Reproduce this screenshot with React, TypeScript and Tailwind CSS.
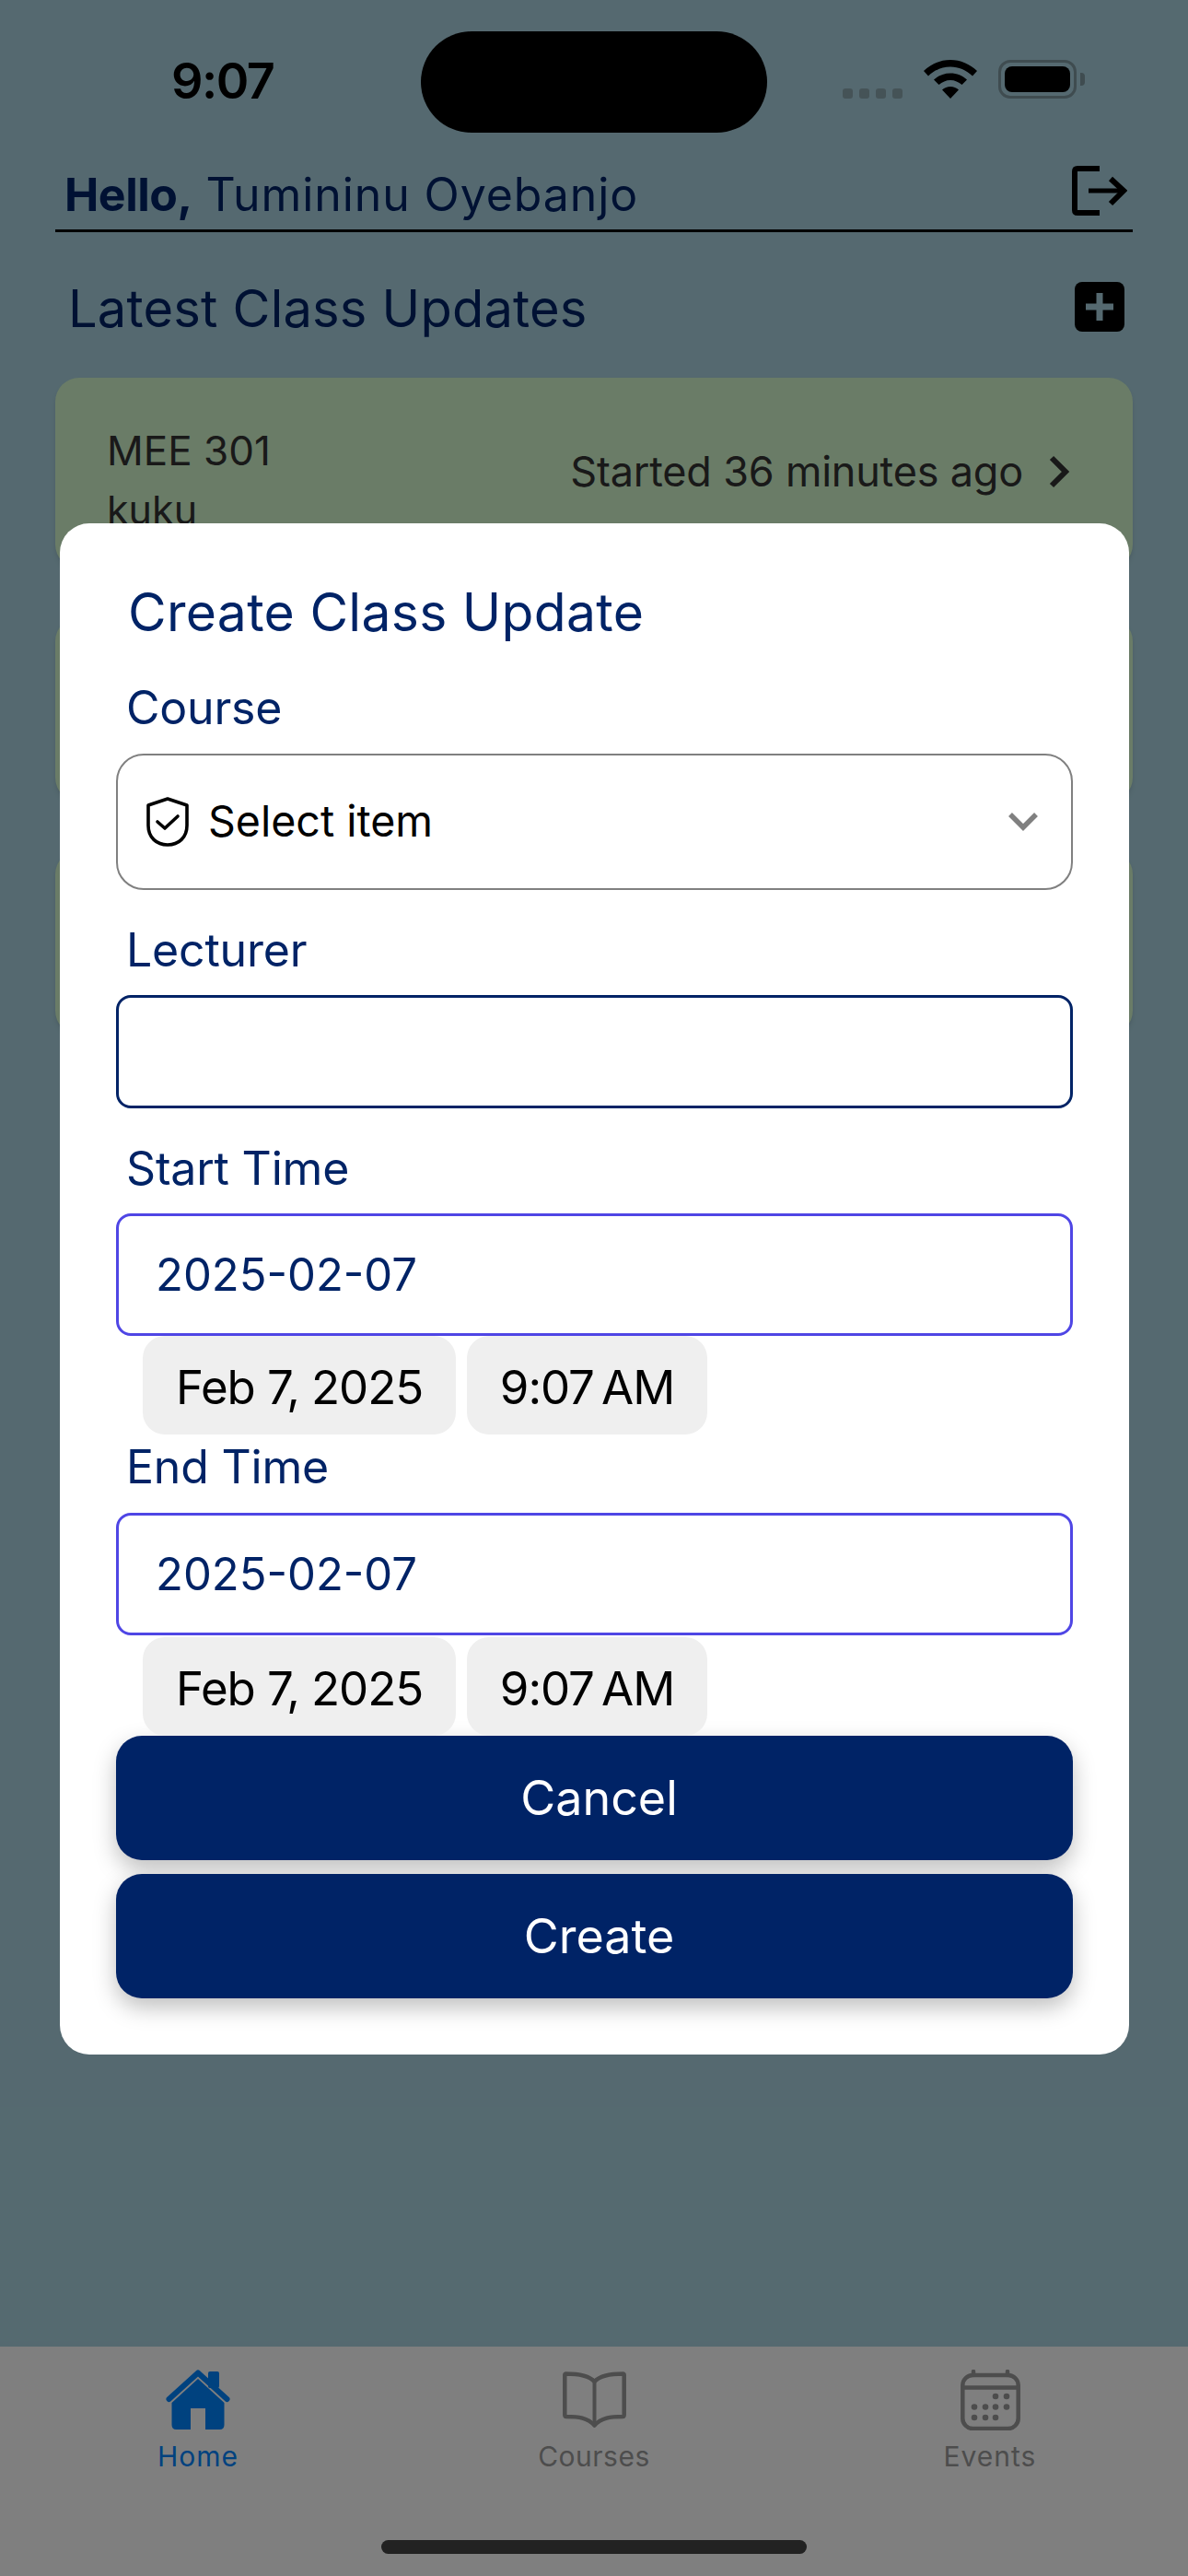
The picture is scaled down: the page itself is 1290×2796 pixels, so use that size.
import React from "react";

const inter = { fontFamily: 'Inter, "Noto Sans", sans-serif' };

function Wifi() {
  return (
    <svg width="58" height="42" viewBox="0 0 58 42" fill="currentColor">
      <path d="M29 0C18 0 8 4.500 0 12l5 5.500C12 11 20 7.500 29 7.500S46 11 53 17.500L58 12C50 4.500 40 0 29 0z" />
      <path d="M29 14.500c-7 0-13 2.500-18 7l5.500 5.500c3.500-3 7.800-5 12.500-5s9 2 12.500 5l5.500-5.500c-5-4.500-11-7-18-7z" />
      <path d="M29 29c-3.500 0-6.500 1.300-9 3.500L29 42l9-9.500c-2.500-2.200-5.500-3.500-9-3.500z" />
    </svg>
  );
}

function Shield() {
  return (
    <svg width="46" height="54" viewBox="0 0 46 54" fill="none" stroke="#000" strokeWidth="3.600" strokeLinejoin="round" strokeLinecap="round" className="shrink-0">
      <path d="M23 2 L44 9 V31 C44 44 35 52 23 52 C11 52 2 44 2 31 V9 Z" />
      <path d="M12 27 L20 34 L34 21" />
    </svg>
  );
}

function HomeIcon() {
  return (
    <svg width="70" height="66" viewBox="0 0 70 66" className="shrink-0">
      <rect x="46" y="2" width="12" height="18" rx="2" fill="#0084ff" />
      <path d="M3.500 32 L35 3.500 L66.500 32" fill="none" stroke="#0084ff" strokeWidth="6" strokeLinecap="round" strokeLinejoin="round" />
      <path d="M35 10 L63.500 36 V60 Q63.500 65 58.500 65 H43 V42 H27 V65 H11.500 Q6.500 65 6.500 60 V36 Z" fill="#0084ff" />
    </svg>
  );
}

function BookIcon() {
  return (
    <svg width="69" height="61" viewBox="0 0 69 61" fill="none" stroke="#9a9a9a" strokeWidth="4.500" strokeLinejoin="round" className="shrink-0">
      <path d="M34.500 11 C28 4 17 2.500 3.500 2.500 C2.800 2.500 2.300 3 2.300 3.700 V47 C2.300 48.500 3 49 4 49 C17 49 27 50 34.500 58.500 C42 50 52 49 65 49 C66 49 66.700 48.500 66.700 47 V3.700 C66.700 3 66.200 2.500 65.500 2.500 C52 2.500 41 4 34.500 11 Z" />
      <path d="M34.500 11 V58" strokeWidth="4" />
    </svg>
  );
}

function CalendarIcon() {
  const dots: [number, number][] = [
    [38, 29], [50, 29],
    [15, 40.500], [27, 40.500], [38, 40.500], [50, 40.500],
    [15, 52], [27, 52], [38, 52],
  ];
  return (
    <svg width="65" height="66" viewBox="0 0 65 66" fill="none" className="shrink-0">
      <rect x="2.300" y="6" width="60.400" height="58" rx="11" stroke="#9a9a9a" strokeWidth="4.500" />
      <path d="M2 19.500 H63" stroke="#9a9a9a" strokeWidth="4.500" />
      <path d="M14 2 V6 M51 2 V6" stroke="#9a9a9a" strokeWidth="4.500" strokeLinecap="round" />
      {dots.map(([x, y]) => (
        <circle key={`${x}-${y}`} cx={x} cy={y} r="3.300" fill="#9a9a9a" />
      ))}
    </svg>
  );
}

function Label({ children, className }: { children: React.ReactNode; className: string }) {
  return (
    <p className={`ml-[11px] text-[50px] leading-[60px] text-[#002366] tracking-[-0.200px] ${className}`}>{children}</p>
  );
}

function DateRow() {
  return (
    <div className="flex ml-[29px] gap-3 h-[107px] text-[51px] leading-[112px] text-black tracking-[-1.100px]">
      <div className="w-[340px] rounded-[24px] bg-[#efefef] text-center">Feb 7, 2025</div>
      <div className="w-[261px] rounded-[24px] bg-[#efefef] text-center [word-spacing:-5px]">9:07 AM</div>
    </div>
  );
}

function DateInput() {
  return (
    <div className="h-[133px] rounded-[16px] border-[3px] border-[#4f46e5] flex items-center pl-[40px] text-[49px] text-[#002366]">
      2025-02-07
    </div>
  );
}

function Card({ className, children }: { className: string; children?: React.ReactNode }) {
  return <div className={`rounded-[26px] bg-[#d4f8ce] shadow-md overflow-hidden ${className}`}>{children}</div>;
}

export default function App() {
  return (
    <div className="relative w-[1290px] h-[2796px] bg-[#aad3e0] overflow-hidden flex flex-col" style={inter}>
      {/* Status bar */}
      <div className="h-[165px] shrink-0 flex items-start relative">
        <span className="absolute left-[186px] top-[54px] text-[54px] leading-[68px] font-semibold text-black tracking-[-1.500px]">9:07</span>
        <div className="absolute right-[121px] top-[65px] flex items-end">
          <div className="flex gap-[7px] mr-[23px]">
            <span className="w-[11px] h-[11px] rounded-[3px] bg-[#8ba6af]" />
            <span className="w-[11px] h-[11px] rounded-[3px] bg-[#8ba6af]" />
            <span className="w-[11px] h-[11px] rounded-[3px] bg-[#8ba6af]" />
            <span className="w-[11px] h-[11px] rounded-[3px] bg-[#8ba6af]" />
          </div>
          <span className="text-black flex mr-[23px]"><Wifi /></span>
          <div className="relative w-[85px] h-[42px] rounded-[13px] border-[3px] border-[#7e98a1] p-[4px]">
            <div className="w-full h-full rounded-[8px] bg-black" />
            <div className="absolute -right-[12px] top-[11px] w-[5px] h-[14px] rounded-r-[4px] bg-[#7e98a1]" />
          </div>
        </div>
      </div>

      {/* Header */}
      <div className="mx-[60px] h-[87px] shrink-0 border-b-[3px] border-black flex items-center justify-between pl-[10px] pr-[6px]">
        <p className="text-[50px] text-[#002366] tracking-[0.900px] relative top-[4px]"><span className="font-bold tracking-[-0.500px]">Hello,</span> Tumininu Oyebanjo</p>
        <svg width="60" height="54" viewBox="0 0 60 54" fill="none" stroke="#000" strokeWidth="6" className="shrink-0">
          <path d="M30 3 H6 C4 3 3 4 3 6 V48 C3 50 4 51 6 51 H30" />
          <path d="M18 27 H56" strokeWidth="5" />
          <path d="M42 14 L56 27 L42 41" />
        </svg>
      </div>

      {/* Section title */}
      <div className="mx-[60px] mt-[50px] h-[62px] shrink-0 flex items-center justify-between pl-[14px] pr-[9px]">
        <p className="text-[56px] text-[#002366] tracking-[0.200px] relative top-[2px]">Latest Class Updates</p>
        <div className="w-[54px] h-[54px] rounded-[8px] bg-black flex items-center justify-center">
          <svg width="30" height="30" viewBox="0 0 30 30" fill="#aad3e0"><path d="M11.500 0h7v11.500H30v7H18.500V30h-7V18.500H0v-7h11.500z" /></svg>
        </div>
      </div>

      {/* Cards */}
      <div className="mx-[60px] mt-[46px] flex flex-col gap-[53px]">
        <Card className="h-[207px]">
          <div className="flex justify-between pl-[56px] pr-[68px] text-[#333]">
            <div className="pt-[44px]">
              <p className="text-[44px] leading-[70px]">MEE 301</p>
              <p className="text-[43px] leading-[58px]">kuku</p>
            </div>
            <div className="flex items-center gap-[27px] pt-[68px] self-start">
              <span className="text-[45px] tracking-[-0.200px]">Started 36 minutes ago</span>
              <svg width="24" height="36" viewBox="0 0 24 36" fill="none" stroke="#333" strokeWidth="6" className="shrink-0"><path d="M4 3 L19 18 L4 33" /></svg>
            </div>
          </div>
        </Card>
        <Card className="h-[200px]" />
        <Card className="h-[200px]" />
      </div>

      {/* Tab bar */}
      <div className="absolute left-0 right-0 bottom-0 h-[249px] bg-white">
        <div className="flex pt-[25px]">
          <div className="w-[430px] flex flex-col items-center">
            <HomeIcon />
            <span className="text-[30px] leading-[36px] mt-[10px] text-[#0084ff] tracking-[1px]">Home</span>
          </div>
          <div className="w-[430px] flex flex-col items-center pt-[2px]">
            <BookIcon />
            <span className="text-[30px] leading-[36px] mt-[13px] text-[#9a9a9a] tracking-[0.500px]">Courses</span>
          </div>
          <div className="w-[430px] flex flex-col items-center">
            <CalendarIcon />
            <span className="text-[30px] leading-[36px] mt-[10px] text-[#9a9a9a] tracking-[1px]">Events</span>
          </div>
        </div>
      </div>

      {/* Dim overlay */}
      <div className="absolute inset-0 bg-black/50" />

      {/* Dynamic island and home indicator, above the dim */}
      <div className="absolute left-[457px] top-[34px] w-[376px] h-[110px] rounded-[55px] bg-black" />
      <div className="absolute left-[414px] top-[2757px] w-[462px] h-[15px] rounded-full bg-[#222222]" />

      {/* Modal */}
      <div className="absolute left-[65px] top-[568px] w-[1161px] h-[1662px] rounded-[32px] bg-white px-[61px] pt-[62px]">
        <p className="ml-[13px] text-[57px] leading-[70px] text-[#002366] tracking-[0.300px]">Create Class Update</p>
        <Label className="mt-[38px]">Course</Label>
        <div className="mt-[20px] h-[148px] rounded-[30px] border-[2px] border-[#808080] flex items-center pl-[31px] pr-[36px]">
          <Shield />
          <span className="ml-[21px] text-[46.500px] text-black flex-1">Select item</span>
          <svg width="32" height="20" viewBox="0 0 32 20" fill="none" stroke="#808080" strokeWidth="5.500" className="shrink-0"><path d="M2 2 L16 16 L30 2" /></svg>
        </div>
        <Label className="mt-[35px]">Lecturer</Label>
        <div className="mt-[19px] h-[123px] rounded-[16px] border-[3px] border-[#002366]" />
        <Label className="mt-[35px]">Start Time</Label>
        <div className="mt-[19px]"><DateInput /></div>
        <DateRow />
        <Label className="mt-[5px]">End Time</Label>
        <div className="mt-[20px]"><DateInput /></div>
        <div className="mt-[2px]"><DateRow /></div>
        <button className="block w-full h-[135px] pl-[10px] rounded-[28px] bg-[#002366] text-white text-[52px] shadow-[0_10px_24px_rgba(0,0,0,0.25)]">Cancel</button>
        <button className="block mt-[15px] w-full h-[135px] pl-[10px] rounded-[28px] bg-[#002366] text-white text-[52px] shadow-[0_10px_24px_rgba(0,0,0,0.25)]">Create</button>
      </div>
    </div>
  );
}
